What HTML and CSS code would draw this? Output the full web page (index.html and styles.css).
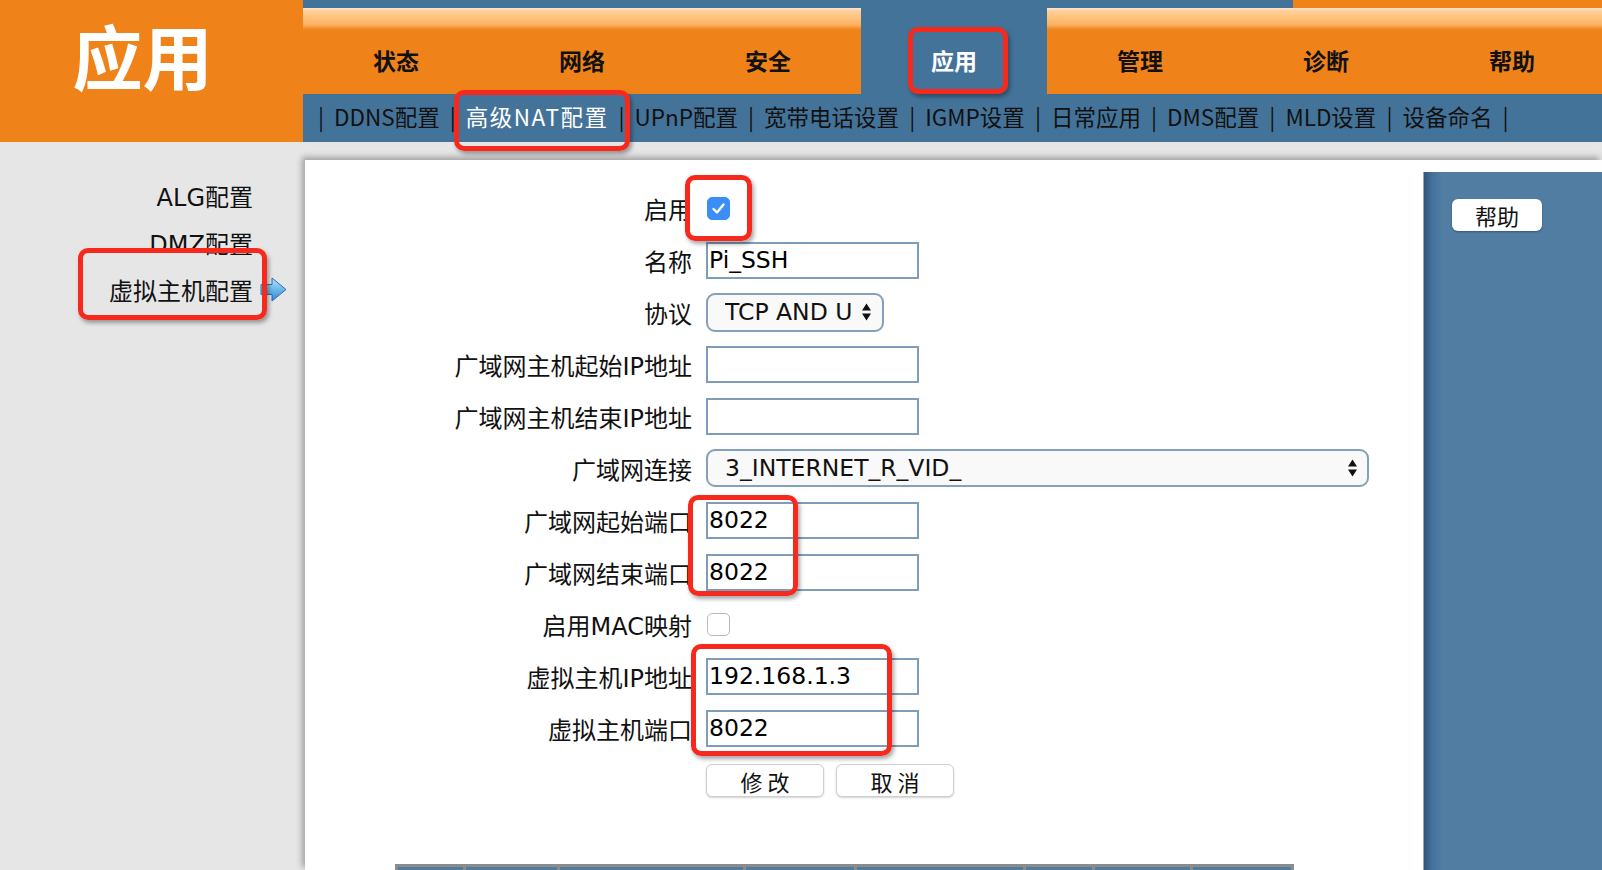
FILE: index.html
```html
<!DOCTYPE html>
<html lang="zh-CN">
<head>
<meta charset="UTF-8">
<meta name="viewport" content="width=device-width, initial-scale=1.0">
<title>应用 - 虚拟主机配置</title>
<link rel="stylesheet" href="styles.css">
</head>
<body>
<div class="page">
  <!-- top header: logo + main tabs + sub menu -->
  <div class="header">
    <div class="logo">应用</div>
    <div class="nav">
      <div class="topline"><span class="topline-orange"></span></div>
      <ul class="tabs">
        <li>状态</li>
        <li>网络</li>
        <li>安全</li>
        <li class="active">应用</li>
        <li>管理</li>
        <li>诊断</li>
        <li>帮助</li>
      </ul>
      <div class="subnav">
        <span class="sep">|</span><a>DDNS配置</a>
        <span class="sep">|</span><a class="current">高级NAT配置</a>
        <span class="sep">|</span><a>UPnP配置</a>
        <span class="sep">|</span><a>宽带电话设置</a>
        <span class="sep">|</span><a>IGMP设置</a>
        <span class="sep">|</span><a>日常应用</a>
        <span class="sep">|</span><a>DMS配置</a>
        <span class="sep">|</span><a>MLD设置</a>
        <span class="sep">|</span><a>设备命名</a>
        <span class="sep">|</span>
      </div>
    </div>
  </div>

  <div class="main">
    <div class="sidebar">
      <div class="side-item">ALG配置<span class="slot"></span></div>
      <div class="side-item">DMZ配置<span class="slot"></span></div>
      <div class="side-item selected">虚拟主机配置<span class="slot">
        <svg width="27" height="25" viewBox="0 0 27 25">
          <defs>
            <linearGradient id="arr" x1="0" y1="0" x2="0" y2="1">
              <stop offset="0" stop-color="#b4e4fb"/>
              <stop offset="0.5" stop-color="#6cb8ec"/>
              <stop offset="1" stop-color="#2f86d2"/>
            </linearGradient>
          </defs>
          <path d="M1 7.5 H12 V1 L26 12.5 L12 24 V17.5 H1 Z" fill="url(#arr)" stroke="#2a6fae" stroke-width="1"/>
        </svg>
      </span></div>
    </div>

    <div class="panel">
      <div class="content">
        <div class="form">
          <div class="label">启用</div>
          <div class="field"><span class="check on">
            <svg width="23" height="23" viewBox="0 0 23 23"><polyline points="6.5,12 10,15.5 16.5,7.5" fill="none" stroke="#fff" stroke-width="2.4" stroke-linecap="round" stroke-linejoin="round"/></svg>
          </span></div>

          <div class="label">名称</div>
          <div class="field"><input class="text" type="text" value="Pi_SSH"></div>

          <div class="label">协议</div>
          <div class="field"><div class="select small"><span class="value">TCP AND UDP</span>
            <svg class="updown" width="11" height="18" viewBox="0 0 11 18"><path d="M1 7.5 L5.5 0.5 L10 7.5 Z M1 10.5 L10 10.5 L5.5 17.5 Z" fill="#111"/></svg>
          </div></div>

          <div class="label">广域网主机起始IP地址</div>
          <div class="field"><input class="text" type="text" value=""></div>

          <div class="label">广域网主机结束IP地址</div>
          <div class="field"><input class="text" type="text" value=""></div>

          <div class="label">广域网连接</div>
          <div class="field"><div class="select wide"><span class="value">3_INTERNET_R_VID_</span>
            <svg class="updown" width="11" height="18" viewBox="0 0 11 18"><path d="M1 7.5 L5.5 0.5 L10 7.5 Z M1 10.5 L10 10.5 L5.5 17.5 Z" fill="#111"/></svg>
          </div></div>

          <div class="label">广域网起始端口</div>
          <div class="field"><input class="text" type="text" value="8022"></div>

          <div class="label">广域网结束端口</div>
          <div class="field"><input class="text" type="text" value="8022"></div>

          <div class="label">启用MAC映射</div>
          <div class="field"><span class="check"></span></div>

          <div class="label">虚拟主机IP地址</div>
          <div class="field"><input class="text" type="text" value="192.168.1.3"></div>

          <div class="label">虚拟主机端口</div>
          <div class="field"><input class="text" type="text" value="8022"></div>

          <div class="label"></div>
          <div class="field buttons">
            <button class="btn">修 改</button>
            <button class="btn">取 消</button>
          </div>
        </div>

        <table class="list">
          <tr>
            <th class="c1"></th>
            <th class="c2"></th>
            <th class="c3">广域网主机IP地址</th>
            <th class="c4">广域网连接</th>
            <th class="c5"></th>
            <th class="c6"></th>
            <th class="c7"></th>
            <th class="c8"></th>
          </tr>
        </table>
      </div>

      <div class="helpbar">
        <button class="help-btn">帮助</button>
      </div>
    </div>
  </div>

  <!-- red annotation frames drawn over the screenshot -->
  <div class="mark mark-tab"></div>
  <div class="mark mark-sub"></div>
  <div class="mark mark-side"></div>
  <div class="mark mark-check"></div>
  <div class="mark mark-port"></div>
  <div class="mark mark-host"></div>
</div>
</body>
</html>
```

FILE: styles.css
```css
body {
    margin: 0;
    padding: 0;
    background: #e6e6e6;
    font-family: "DejaVu Sans", "Noto Sans CJK SC", sans-serif;
    color: #111;
    overflow: hidden;
}
.page {
    position: relative;
    width: 1602px;
    height: 870px;
    overflow: hidden;
}

/* Header */
.header {
    display: flex;
    height: 142px;
}
.logo {
    width: 303px;
    flex-shrink: 0;
    background: #ef831a;
    color: #fff;
    font-family: "Noto Sans CJK SC", sans-serif;
    font-weight: bold;
    font-size: 70px;
    line-height: 1;
    display: flex;
    justify-content: center;
    align-items: center;
    padding: 0 18px 32px 0;
    box-sizing: border-box;
}
.nav {
    flex: 1;
    background: #44739a;
    display: flex;
    flex-direction: column;
    overflow: hidden;
}
.topline {
    height: 8px;
    display: flex;
}
.topline-orange {
    margin-left: 990px;
    flex: 1;
    background: #ef831a;
}
.tabs {
    list-style: none;
    margin: 0;
    padding: 0;
    height: 86px;
    display: flex;
}
.tabs li {
    width: 186px;
    flex-shrink: 0;
    box-sizing: border-box;
    padding-top: 18px;
    display: flex;
    justify-content: center;
    align-items: center;
    font-family: "Noto Sans CJK SC", sans-serif;
    font-weight: bold;
    font-size: 23px;
    color: #111;
    background: linear-gradient(#fbe4d6 0px, #ffcf99 3px, #ffc27c 10px, #fbb062 17px, #f39331 20px, #ef831a 22px);
}
.tabs li.active {
    background: #44739a;
    color: #fff;
}
.subnav {
    height: 48px;
    box-sizing: border-box;
    padding: 1px 0 0 12px;
    line-height: 42px;
    font-family: "Noto Sans CJK SC", sans-serif;
    font-size: 22.5px;
    white-space: nowrap;
    color: #111;
}
.subnav .sep {
    margin: 0 10px 0 5px;
}
.subnav .sep:first-child {
    margin-left: 3px;
}
.subnav a.current {
    color: #fff;
    letter-spacing: 1.5px;
}

/* Body */
.main {
    display: flex;
    height: 728px;
}
.sidebar {
    width: 305px;
    flex-shrink: 0;
    padding-top: 30px;
    box-sizing: border-box;
}
.side-item {
    height: 47px;
    display: flex;
    justify-content: flex-end;
    align-items: center;
    padding-right: 18px;
    font-size: 24px;
}
.side-item .slot {
    width: 27px;
    height: 25px;
    margin-left: 7px;
    display: flex;
}
.panel {
    flex: 1;
    margin-top: 18px;
    background: #fff;
    display: flex;
    box-shadow: -3px -3px 6px rgba(0, 0, 0, 0.3);
}
.content {
    flex: 1;
    padding-top: 22px;
}
.form {
    display: grid;
    grid-template-columns: 387px 1fr;
    grid-auto-rows: 52px;
    column-gap: 14px;
    align-items: center;
}
.label {
    text-align: right;
    font-size: 24px;
    white-space: nowrap;
}
.field {
    display: flex;
    align-items: center;
}
.text {
    width: 213px;
    height: 37px;
    box-sizing: border-box;
    border: 2px solid #7f9dba;
    padding: 0 1px;
    margin: 0;
    font-family: "DejaVu Sans", sans-serif;
    font-size: 23.5px;
    color: #000;
    background: #fff;
    outline: none;
}
.check {
    width: 23px;
    height: 23px;
    box-sizing: border-box;
    border-radius: 5px;
    border: 1px solid #b9b9b9;
    background: #fff;
    display: flex;
    margin-left: 1px;
}
.check.on {
    background: #3a8ef6;
    border-color: #3a8ef6;
}
.check svg {
    margin: -1px;
}
.select {
    height: 39px;
    box-sizing: border-box;
    border: 2px solid #84a0bb;
    border-radius: 9px;
    background: #f9f9f9;
    display: flex;
    align-items: center;
    padding: 0 9px 0 17px;
    font-family: "DejaVu Sans", sans-serif;
    font-size: 23.5px;
}
.select.small {
    width: 178px;
    padding-right: 10px;
}
.select.small .value {
    flex: 0 0 129px;
}
.select.wide {
    width: 663px;
    height: 38px;
}
.select .value {
    flex: 1;
    overflow: hidden;
    white-space: nowrap;
}
.select .updown {
    flex-shrink: 0;
    margin-left: auto;
}
.buttons {
    gap: 12px;
}
.btn {
    width: 118px;
    height: 33px;
    background: #fff;
    border: 1px solid #cfcfcf;
    border-radius: 6px;
    box-shadow: 0 1px 2px rgba(0, 0, 0, 0.18);
    font-family: "Noto Sans CJK SC", sans-serif;
    font-size: 22px;
    color: #111;
    padding: 0;
}
.list {
    margin: 58px 0 0 90px;
    width: 899px;
    background: #8c8c8c;
    border-spacing: 3px;
}
.list th {
    height: 40px;
    background: #507ca0;
    color: #fff;
    font-family: "Noto Sans CJK SC", sans-serif;
    font-size: 20px;
    font-weight: normal;
    vertical-align: top;
    padding: 1px 4px 0;
    white-space: nowrap;
    overflow: hidden;
}
.list .c1 { width: 64px; }
.list .c2 { width: 94px; }
.list .c3 { width: 177px; }
.list .c4 { width: 98px; }
.list .c5 { width: 178px; }
.list .c6 { width: 65px; }
.list .c7 { width: 98px; }
.list .c8 { width: 101px; }

.helpbar {
    width: 179px;
    flex-shrink: 0;
    margin-top: 12px;
    border-left: 1px solid #9aa6b1;
    background: linear-gradient(to right, #2f5677 0px, #44709a 8px, #507da1 18px);
    padding: 27px 0 0 28px;
    box-sizing: border-box;
}
.help-btn {
    width: 90px;
    height: 32px;
    background: #fff;
    border: none;
    border-radius: 6px;
    box-shadow: 0 1px 2px rgba(0, 0, 0, 0.3);
    font-family: "Noto Sans CJK SC", sans-serif;
    font-size: 22px;
    color: #111;
    padding: 0;
}

/* red annotation frames */
.mark {
    position: absolute;
    box-sizing: border-box;
    border: 5px solid #f7291c;
    border-radius: 10px;
    box-shadow: 2px 3px 4px rgba(0, 0, 0, 0.35);
}
.mark-tab { left: 908px; top: 27px; width: 100px; height: 67px; }
.mark-sub { left: 454px; top: 90px; width: 176px; height: 61px; }
.mark-side { left: 78px; top: 248px; width: 189px; height: 72px; }
.mark-check { left: 685px; top: 175px; width: 67px; height: 66px; }
.mark-port { left: 688px; top: 495px; width: 110px; height: 101px; }
.mark-host { left: 691px; top: 644px; width: 201px; height: 112px; }
```
